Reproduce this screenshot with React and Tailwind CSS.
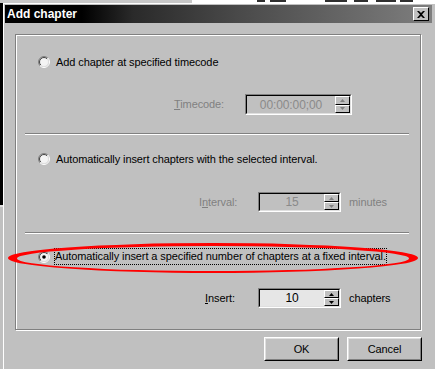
import React from 'react';

const raised =
  'border border-t-white border-l-white border-b-black border-r-black';
const raisedInner =
  'border border-t-[#dfdfdf] border-l-[#dfdfdf] border-b-[#808080] border-r-[#808080]';

const Radio = ({ checked }) => (
  <svg width="12" height="12" viewBox="0 0 12 12" className="shrink-0">
    <defs>
      <linearGradient id="rOuter" x1="0" y1="0" x2="1" y2="1">
        <stop offset="0.5" stopColor="#808080" />
        <stop offset="0.5" stopColor="#ffffff" />
      </linearGradient>
      <linearGradient id="rInner" x1="0" y1="0" x2="1" y2="1">
        <stop offset="0.5" stopColor="#404040" />
        <stop offset="0.5" stopColor="#dfdfdf" />
      </linearGradient>
    </defs>
    <circle cx="6" cy="6" r="5.5" fill="none" stroke="url(#rOuter)" strokeWidth="1" />
    <circle cx="6" cy="6" r="4.5" fill="#f4f4f4" stroke="url(#rInner)" strokeWidth="1" />
    {checked && <circle cx="6" cy="6" r="1.8" fill="#000" />}
  </svg>
);

const Spinner = ({ disabled }) => {
  const arrow = disabled ? '#808080' : '#000';
  return (
    <div className="flex flex-col w-[15px] h-full">
      {[0, 1].map((i) => (
        <div key={i} className={`flex-1 ${raised} bg-[#c0c0c0] flex items-center justify-center`}>
          <svg width="5" height="3" viewBox="0 0 5 3">
            {i === 0 ? (
              <polygon points="2.5,0 5,3 0,3" fill={arrow} />
            ) : (
              <polygon points="0,0 5,0 2.5,3" fill={arrow} />
            )}
          </svg>
        </div>
      ))}
    </div>
  );
};

const Field = ({ value, width, height, disabled }) => (
  <div
    className="border border-t-[#808080] border-l-[#808080] border-b-white border-r-white"
    style={{ width, height }}
  >
    <div
      className={`h-full flex items-stretch border border-t-[#000] border-l-[#000] border-b-[#dfdfdf] border-r-[#dfdfdf] ${
        disabled ? 'bg-[#c0c0c0]' : 'bg-[#e6e6e6]'
      }`}
    >
      <div
        className={`flex-1 flex items-center justify-center text-[12px] ${
          disabled ? 'text-[#8a8a8a]' : 'text-black'
        }`}
      >
        {value}
      </div>
      <Spinner disabled={disabled} />
    </div>
  </div>
);

const Divider = () => (
  <div className="ml-[9px] w-[384px] h-px bg-[#808080] shadow-[0_1px_0_#ffffff]" />
);

const App = () => {
  return (
    <div className="w-[435px] h-[369px] relative overflow-hidden bg-[#c0c0c0] font-['Liberation_Sans',Arial,sans-serif] text-[11px] tracking-[-0.1px] text-black flex flex-col">
      {/* background strip above the window */}
      <div className="h-[3px] flex shrink-0">
        <div className="w-[192px] bg-[#c8c8c8]" />
        <div className="flex-1 bg-white relative">
          <div className="absolute left-[65px] top-0 w-[8px] h-[2px] bg-[#303030]" />
          <div className="absolute left-[78px] top-0 w-[16px] h-[2px] bg-[#303030]" />
          <div className="absolute left-[133px] top-0 w-[22px] h-[2px] bg-[#303030]" />
          <div className="absolute left-[162px] top-0 w-[14px] h-[2px] bg-[#303030]" />
          <div className="absolute left-[184px] top-0 w-[20px] h-[2px] bg-[#303030]" />
          <div className="absolute left-[208px] top-0 w-[13px] h-[2px] bg-[#303030]" />
        </div>
      </div>

      <div className="flex flex-1">
        {/* desktop behind */}
        <div className="w-[3px] flex flex-col shrink-0">
          <div className="h-[202px] bg-black" />
          <div className="h-[2px] bg-[#e0e0e0]" />
          <div className="flex-1 bg-[#c0c0c0]" />
        </div>

        {/* dialog */}
        <div className="flex-1 border-t border-l border-white p-px flex flex-col">
          {/* title bar */}
          <div className="h-[18px] w-[427px] flex items-center justify-between pl-[2px] pr-[3px] bg-[linear-gradient(90deg,#000000_0%,#000000_18%,#2a2a2a_30%,#4a4a4a_55%,#7e7e7e_100%)]">
            <span className="text-white font-bold text-[12px] tracking-normal">Add chapter</span>
            <div className={`w-[16px] h-[14px] ${raised} bg-[#c0c0c0] flex items-center justify-center`}>
              <svg width="8" height="7" viewBox="0 0 8 7">
                <path d="M0 0 L2 0 L4 2 L6 0 L8 0 L5 3.5 L8 7 L6 7 L4 5 L2 7 L0 7 L3 3.5 Z" fill="#000" />
              </svg>
            </div>
          </div>

          {/* group box */}
          <div className="ml-[10px] mt-[11px] w-[406px] h-[296px] border border-[#808080] shadow-[inset_1px_1px_0_#ffffff,1px_1px_0_#ffffff] flex flex-col">
            {/* section 1 */}
            <div className="h-[98px] pt-[20px] flex flex-col">
              <div className="h-[14px] flex items-center ml-[22px] gap-[6px]">
                <Radio />
                <span>Add chapter at specified timecode</span>
              </div>
              <div className="mt-[25px] flex items-center">
                <span className="ml-[158px] w-[71px] text-[#808080]">
                  <span className="underline">T</span>imecode:
                </span>
                <Field value="00:00:00;00" width={107} height={21} disabled />
              </div>
            </div>
            <Divider />

            {/* section 2 */}
            <div className="h-[98px] pt-[18px] flex flex-col">
              <div className="h-[14px] flex items-center ml-[22px] gap-[6px]">
                <Radio />
                <span>Automatically insert chapters with the selected interval.</span>
              </div>
              <div className="mt-[26px] flex items-center">
                <span className="ml-[183px] w-[59px] text-[#808080]">
                  I<span className="underline">n</span>terval:
                </span>
                <Field value="15" width={83} height={20} disabled />
                <span className="ml-[8px] text-[#808080]">minutes</span>
              </div>
            </div>
            <Divider />

            {/* section 3 */}
            <div className="flex-1 pt-[15px] flex flex-col">
              <div className="h-[17px] flex items-center ml-[22px] gap-[4px]">
                <Radio checked />
                <span className="h-[17px] px-px flex items-center outline-1 outline-dotted outline-black -outline-offset-1">
                  Automatically insert a specified number of chapters at a fixed interval.
                </span>
              </div>
              <div className="mt-[23px] flex items-center">
                <span className="ml-[189px] w-[53px]">
                  <span className="underline">I</span>nsert:
                </span>
                <Field value="10" width={83} height={20} />
                <span className="ml-[8px]">chapters</span>
              </div>
            </div>
          </div>

          {/* buttons */}
          <div className="mt-[7px] flex justify-end gap-[8px] w-[427px] pr-[10px]">
            {['OK', 'Cancel'].map((label) => (
              <div key={label} className={`w-[75px] h-[24px] ${raised} bg-[#c0c0c0]`}>
                <div className={`h-full ${raisedInner} flex items-center justify-center`}>
                  {label}
                </div>
              </div>
            ))}
          </div>
        </div>
      </div>

      {/* red hand-drawn ellipse */}
      <svg className="absolute left-0 top-0 pointer-events-none" width="435" height="369">
        <path
          fillRule="evenodd"
          fill="#ff0000"
          d="M8 258 A205 15 0 1 0 418 258 A205 15 0 1 0 8 258 Z M17 258.5 A196 12.5 0 1 0 409 258.5 A196 12.5 0 1 0 17 258.5 Z"
        />
      </svg>
    </div>
  );
};

export default App;
